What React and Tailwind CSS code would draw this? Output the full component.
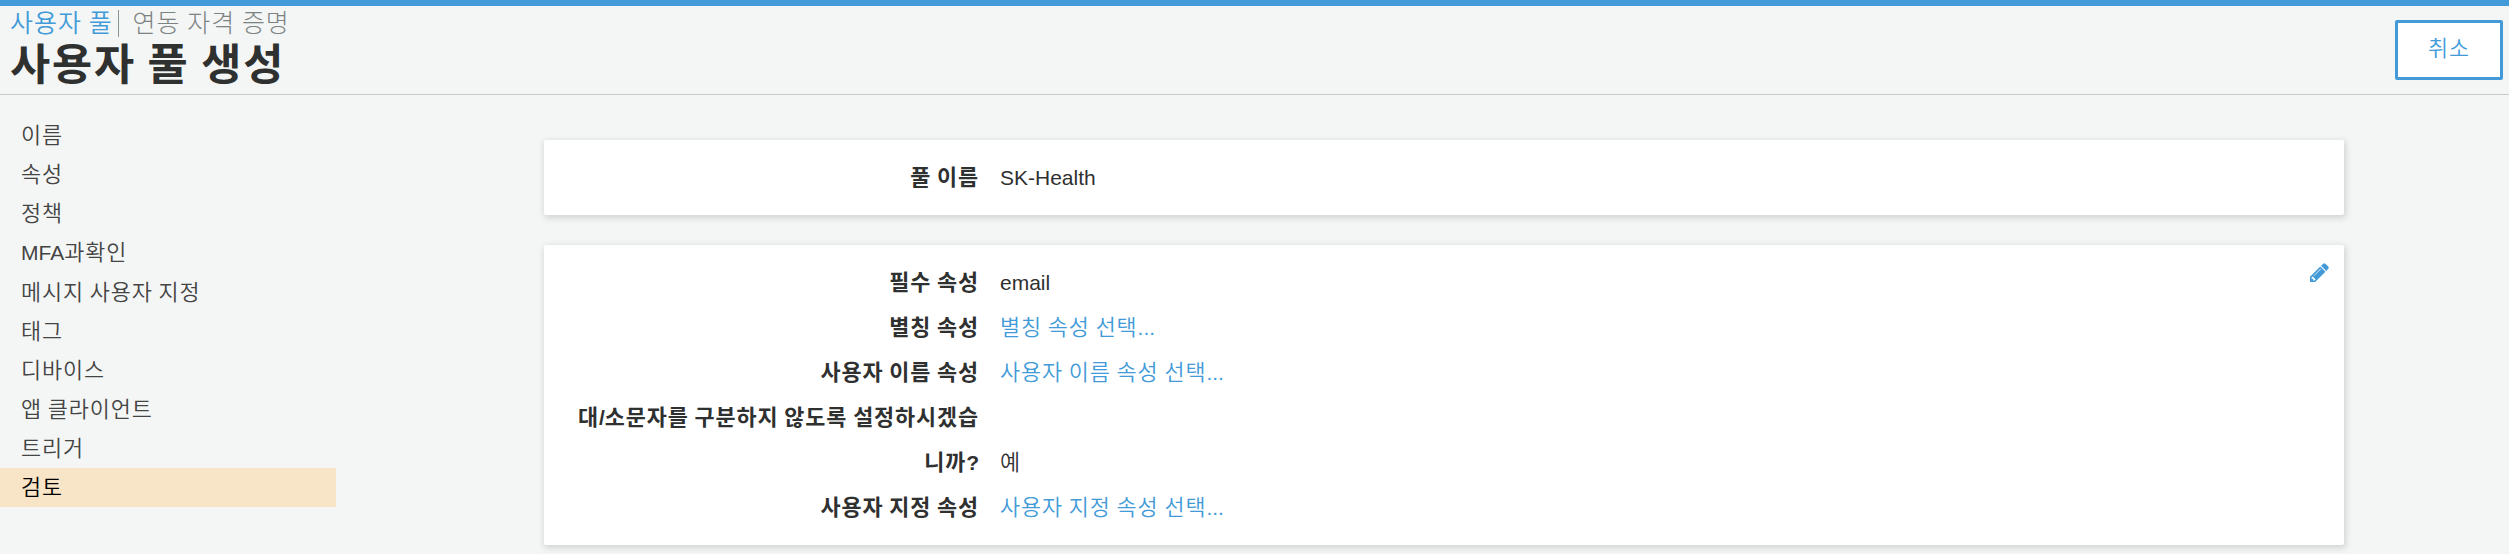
import { Fragment } from "react";

const steps = ["이름", "속성", "정책", "MFA과확인", "메시지 사용자 지정", "태그", "디바이스", "앱 클라이언트", "트리거", "검토"];

const attributes = [
  { label: ["필수 속성"], value: "email" },
  { label: ["별칭 속성"], value: "별칭 속성 선택...", link: true },
  { label: ["사용자 이름 속성"], value: "사용자 이름 속성 선택...", link: true },
  { label: ["대/소문자를 구분하지 않도록 설정하시겠습", "니까?"], value: "예" },
  { label: ["사용자 지정 속성"], value: "사용자 지정 속성 선택...", link: true },
];

// Hangul runs are set on a full-em pitch; Latin runs and spaces keep their own widths.
function Mixed({ children }) {
  return children.split(/([가-힣]+)/).map((part, i) =>
    i % 2 ? (
      <span key={i} className="text-[1.04em] leading-none tracking-[0.041em]">{part}</span>
    ) : (
      <Fragment key={i}>{part}</Fragment>
    )
  );
}

function Card({ children }) {
  return (
    <section className="relative w-[1800px] rounded-[2px] bg-white py-[15px] shadow-[1px_2px_6px_1px_rgba(0,0,0,0.14)]">
      {children}
    </section>
  );
}

function Row({ label, value, link }) {
  return (
    <div className="flex items-end leading-[45px]">
      <div className="w-[435px] shrink-0 text-right font-bold">
        {label.map((line) => (
          <div key={line} className="h-[45px] whitespace-nowrap"><Mixed>{line}</Mixed></div>
        ))}
      </div>
      <div className={link ? "ml-[21px] h-[45px] text-[#429bd8]" : "ml-[21px] h-[45px]"}>
        <Mixed>{value}</Mixed>
      </div>
    </div>
  );
}

function PencilIcon() {
  return (
    <svg viewBox="0 0 1536 1536" className="h-[19px] w-[19px] fill-[#429bd8]">
      <path d="M363 1408l91-91-235-235-91 91v107h128v128h107zM886 480q0-22-22-22-10 0-17 7l-542 542q-7 7-7 17 0 22 22 22 10 0 17-7l542-542q7-7 7-17zM832 288l416 416-832 832H0v-416zM1515 384q0 53-37 90l-166 166-416-416 166-165q36-38 90-38 53 0 91 38l235 234q37 39 37 91z" />
    </svg>
  );
}

export default function App() {
  return (
    <div className="h-[554px] overflow-hidden border-t-[6px] border-[#429bd8] bg-[#f4f6f6] font-['Liberation_Sans','Noto_Sans_CJK_KR',sans-serif] text-[21px] font-[350] text-[#2f3030]">
      <header className="flex h-[89px] justify-between border-b border-[#c8caca] pr-[6px] pl-[10px]">
        <div>
          <div className="flex h-[34px] items-center text-[24px] leading-[34px]">
            <a className="pt-0.5 text-[#429bd8]"><Mixed>사용자 풀</Mixed></a>
            <span className="ml-[5px] h-[27px] w-px bg-[#8a9393]" />
            <a className="ml-[14px] pt-0.5 font-light text-[#7d8383]"><Mixed>연동 자격 증명</Mixed></a>
          </div>
          <h1 className="mt-[3px] text-[42px] leading-[46px] font-bold"><Mixed>사용자 풀 생성</Mixed></h1>
        </div>
        <button className="mt-[14px] h-[60px] w-[108px] rounded-[2px] border-[3px] border-[#429bd8] bg-white pb-0.5 text-[#429bd8]">
          <Mixed>취소</Mixed>
        </button>
      </header>
      <div className="flex">
        <nav className="w-[336px] shrink-0 pt-[21px]">
          {steps.map((step, i) => (
            <a
              key={step}
              className={
                i === steps.length - 1
                  ? "block h-[39.15px] bg-[#f8e4c6] pl-[21px] leading-[39px] text-black"
                  : "block h-[39.15px] pl-[21px] leading-[39px] text-[#444]"
              }
            >
              <Mixed>{step}</Mixed>
            </a>
          ))}
        </nav>
        <main className="ml-[208px] flex flex-col gap-[30px] pt-[45px]">
          <Card>
            <Row label={["풀 이름"]} value="SK-Health" />
          </Card>
          <Card>
            <button aria-label="edit" className="absolute top-[18px] right-[15px]"><PencilIcon /></button>
            {attributes.map((row) => (
              <Row key={row.label[0]} {...row} />
            ))}
          </Card>
        </main>
      </div>
    </div>
  );
}
